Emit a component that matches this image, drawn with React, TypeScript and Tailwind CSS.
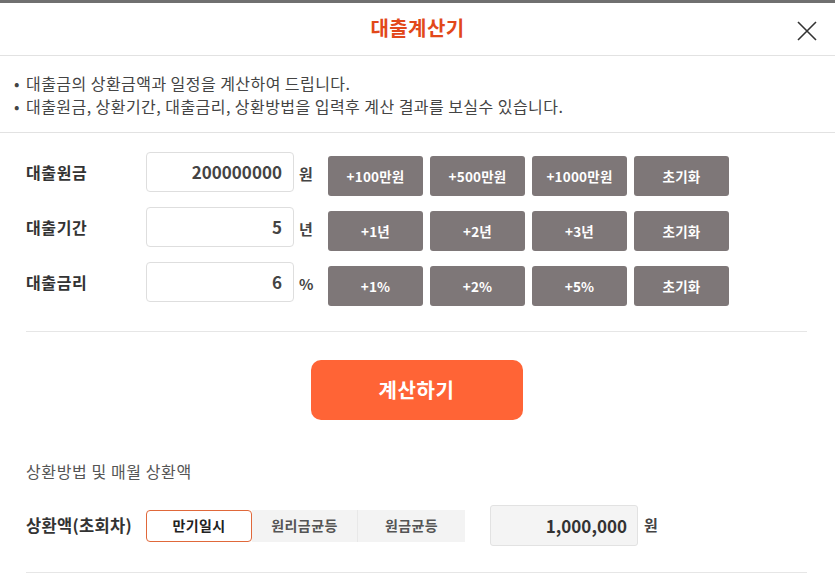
import React from "react";

const font = { fontFamily: '"Noto Sans CJK KR", "Noto Sans", sans-serif' };

function Row({
  label,
  value,
  unit,
  buttons,
}: {
  label: string;
  value: string;
  unit: string;
  buttons: string[];
}) {
  return (
    <div className="flex items-start h-[44px]">
      <div className="w-[120px] h-[40px] flex items-center text-[16px] tracking-[0.6px] font-bold text-[#333]">{label}</div>
      <div className="w-[148px] h-[40px] border border-[#dedede] rounded-[4px] bg-white flex items-center justify-end pr-[11px] text-[17px] font-bold text-[#444]">
        {value}
      </div>
      <div className="w-[34px] pl-[5px] h-[40px] flex items-center text-[15px] font-bold text-[#444] mt-[2px]">{unit}</div>
      <div className="flex gap-[7px] mt-[4px]">
        {buttons.map((b, i) => (
          <div
            key={i}
            className="w-[95px] h-[40px] rounded-[3px] bg-[#7e7778] text-white text-[13.5px] tracking-[0.2px] font-bold flex items-center justify-center"
          >
            {b}
          </div>
        ))}
      </div>
    </div>
  );
}

export default function App() {
  return (
    <div className="w-[835px] h-[577px] bg-white overflow-hidden" style={font}>
      <div className="h-[3px] bg-[#707070]" />
      <div className="relative h-[53px] border-b border-[#e2e2e2] flex items-center justify-center">
        <div className="text-[20px] font-bold text-[#e2481a] tracking-[0.4px] -mt-[2px]">대출계산기</div>
        <svg
          className="absolute right-[17px] top-[17px]"
          width="22"
          height="22"
          viewBox="0 0 22 22"
          fill="none"
          stroke="#333"
          strokeWidth="1.6"
        >
          <path d="M2 2 L20 20 M20 2 L2 20" />
        </svg>
      </div>
      <div className="pl-[14px] pt-[16px] pb-[14px] border-b border-[#e2e2e2] text-[16px] tracking-[0.45px] leading-[23px] text-[#444]">
        <div className="flex">
          <span className="w-[12px]">•</span>
          <span>대출금의 상환금액과 일정을 계산하여 드립니다.</span>
        </div>
        <div className="flex">
          <span className="w-[12px]">•</span>
          <span>대출원금, 상환기간, 대출금리, 상환방법을 입력후 계산 결과를 보실수 있습니다.</span>
        </div>
      </div>
      <div className="pl-[26px] pr-[28px] pt-[19px]">
        <div className="flex flex-col gap-[11px]">
          <Row label="대출원금" value="200000000" unit="원" buttons={["+100만원", "+500만원", "+1000만원", "초기화"]} />
          <Row label="대출기간" value="5" unit="년" buttons={["+1년", "+2년", "+3년", "초기화"]} />
          <Row label="대출금리" value="6" unit="%" buttons={["+1%", "+2%", "+5%", "초기화"]} />
        </div>
        <div className="mt-[25px] border-t border-[#e6e6e6]" />
        <div className="flex justify-center mt-[28px]">
          <div className="w-[212px] h-[60px] rounded-[10px] bg-[#ff6436] text-white text-[20px] tracking-[0.6px] font-bold flex items-center justify-center">
            계산하기
          </div>
        </div>
        <div className="mt-[40px] text-[16px] tracking-[0.6px] leading-[22px] text-[#555]">상환방법 및 매월 상환액</div>
        <div className="mt-[23px] flex items-center h-[41px]">
          <div className="w-[120px] text-[16.5px] tracking-[0.3px] font-bold text-[#333]">상환액(초회차)</div>
          <div className="flex h-[32px]">
            <div className="w-[106px] border border-[#e0683a] rounded-[4px] bg-white flex items-center justify-center text-[14px] tracking-[0.4px] font-bold text-[#222]">
              만기일시
            </div>
            <div className="w-[106px] bg-[#f3f3f3] border-r border-[#e8e8e8] flex items-center justify-center text-[14px] tracking-[0.4px] font-bold text-[#555]">
              원리금균등
            </div>
            <div className="w-[107px] bg-[#f3f3f3] flex items-center justify-center text-[14px] tracking-[0.4px] font-bold text-[#555]">
              원금균등
            </div>
          </div>
          <div className="ml-[25px] w-[148px] h-[41px] bg-[#f4f4f4] border border-[#e2e2e2] rounded-[3px] flex items-center justify-end pr-[10px] text-[17px] font-bold text-[#333]">
            1,000,000
          </div>
          <div className="pl-[6px] text-[15px] font-bold text-[#444]">원</div>
        </div>
        <div className="mt-[26px] border-t border-[#e6e6e6]" />
      </div>
    </div>
  );
}
